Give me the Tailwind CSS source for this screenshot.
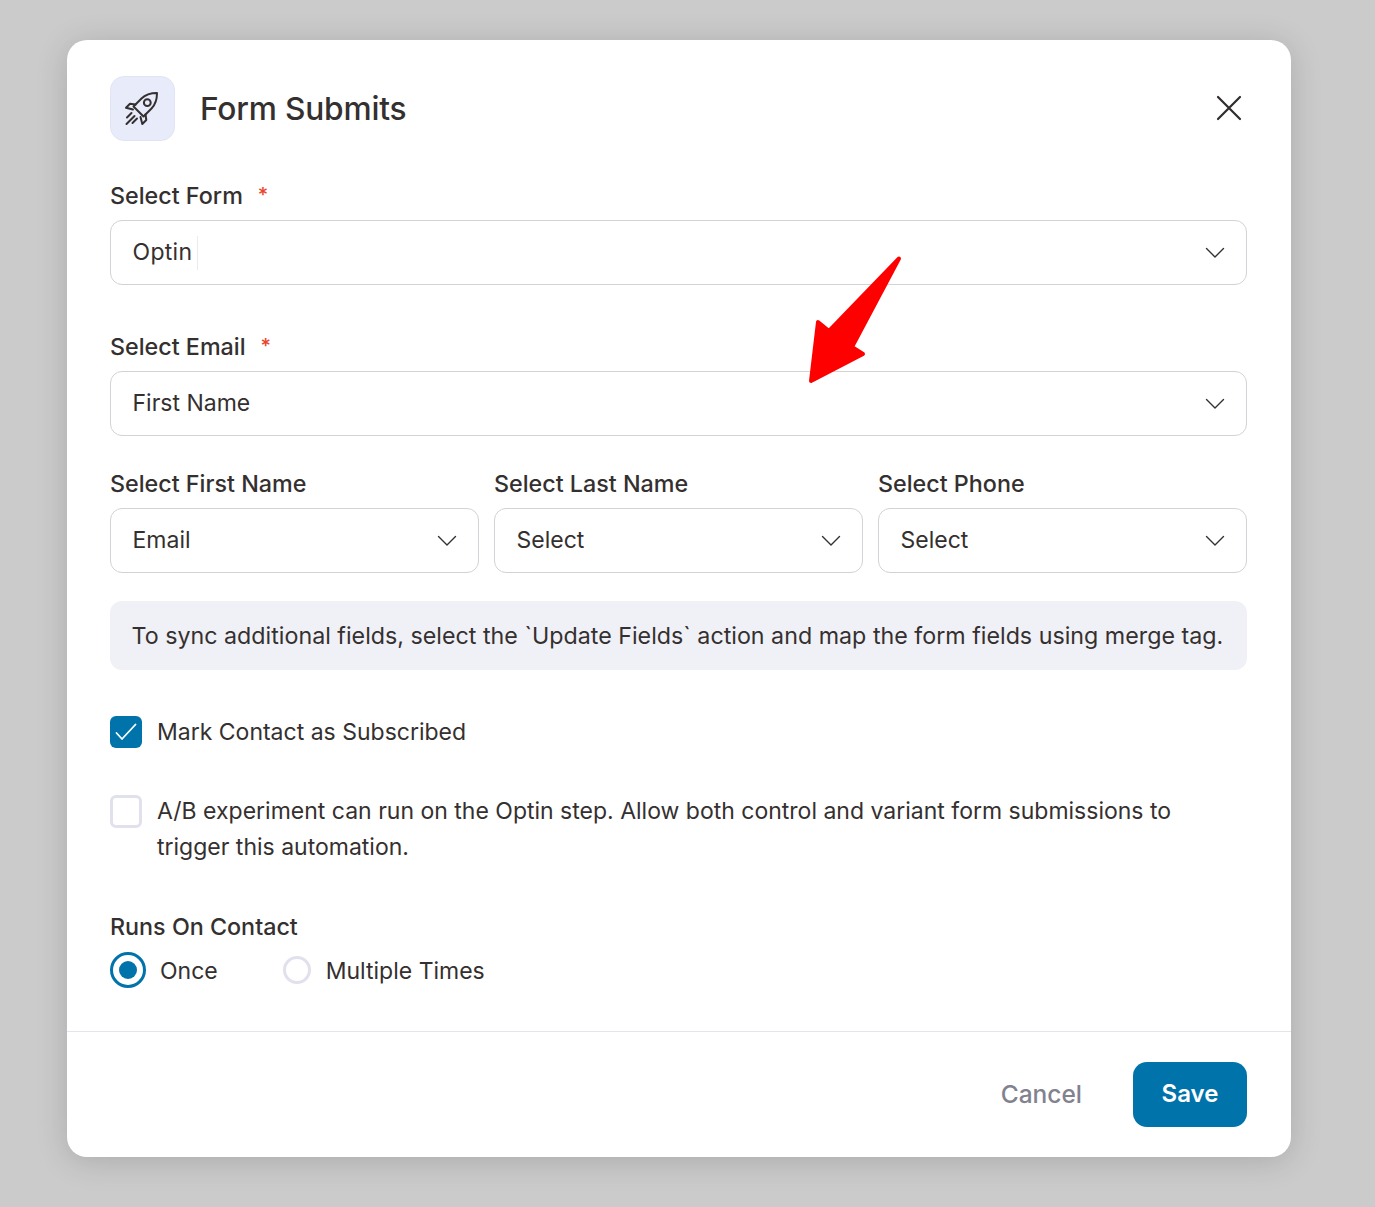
<!DOCTYPE html>
<html lang="en">
<head>
    <meta charset="utf-8" />
    <title>Form Submits</title>
    <script src="https://cdn.jsdelivr.net/npm/@tailwindcss/browser@4"></script>
</head>
<body class="bg-[#cbcbcb] font-['Inter',sans-serif] text-[#353030] h-[1207px] overflow-hidden">
    <div class="relative ml-[67px] mt-[40px] w-[1224px] h-[1117px] bg-white rounded-[20px] shadow-[0_4px_32px_rgba(0,0,0,0.16)] flow-root">
        <div class="pl-[43px] pr-[44px] pt-[36px]">
            <!-- header -->
            <div class="flex items-center h-[65px]">
                <div class="w-[65px] h-[65px] rounded-[14px] bg-[#e8ebfa] border border-[#e2e4f2] flex items-center justify-center">
                    <svg class="w-[36px] h-[36px] -ml-[3px]" viewBox="0 0 36 36" fill="none" stroke="#353030" stroke-width="2" stroke-linecap="round" stroke-linejoin="round">
                        <path d="M34 2c-6 0-11.500 1.500-15.500 5.500L10.500 15.500l10 10 8-8C32.500 13.500 34 8 34 2z" />
                        <circle cx="24.300" cy="11.700" r="3.400" />
                        <path d="M12.500 13.500l-5.500-.8-4 4 7 1.800" />
                        <path d="M22.500 23.500l.8 5.500-4 4-1.800-7" />
                        <path d="M8.500 22l-4.500 4.500M11.500 25l-8 8M14 27.500l-4.500 4.500" />
                    </svg>
                </div>
                <h1 class="ml-[25px] text-[31.700px] font-medium tracking-[-0.2px] flex-1">Form Submits</h1>
                <svg class="w-[28px] h-[28px] mr-[4px] -mt-[2px]" viewBox="0 0 28 28" fill="none" stroke="#2f2c2c" stroke-width="2.200" stroke-linecap="round">
                    <path d="M3 3l22 22M25 3L3 25" />
                </svg>
            </div>

            <!-- select form -->
            <div class="mt-[40px] h-[30px] mb-[9px] flex items-center text-[23.300px] font-medium">
                Select Form <span class="ml-[15px] text-[#e8452c] text-[20px] -mt-[2px]">*</span>
            </div>
            <div class="h-[65px] rounded-[12px] border border-[#d3d3d6] flex items-center justify-between pl-[21.500px] pr-[21px] text-[23px]">
                <div class="flex items-center tracking-[0.3px]">Optin<span class="ml-[5px] w-px h-[34px] bg-[#ececec]"></span></div>
                <svg class="w-[20px] h-[12px]" viewBox="0 0 20 12" fill="none" stroke="#353030" stroke-width="1.400" stroke-linecap="round" stroke-linejoin="round"><path d="M1.500 1.500l8.500 8.500 8.500-8.500" /></svg>
            </div>

            <!-- select email -->
            <div class="mt-[47px] h-[30px] mb-[9px] flex items-center text-[23.300px] font-medium">
                Select Email <span class="ml-[15px] text-[#e8452c] text-[20px] -mt-[2px]">*</span>
            </div>
            <div class="h-[65px] rounded-[12px] border border-[#d3d3d6] flex items-center justify-between pl-[21.500px] pr-[21px] text-[23px]">
                First Name
                <svg class="w-[20px] h-[12px]" viewBox="0 0 20 12" fill="none" stroke="#353030" stroke-width="1.400" stroke-linecap="round" stroke-linejoin="round"><path d="M1.500 1.500l8.500 8.500 8.500-8.500" /></svg>
            </div>

            <!-- name and phone -->
            <div class="mt-[33px] grid grid-cols-3 gap-x-[15px]">
                <div>
                    <div class="h-[30px] mb-[9px] flex items-center text-[23.300px] font-medium">Select First Name</div>
                    <div class="h-[65px] rounded-[12px] border border-[#d3d3d6] flex items-center justify-between pl-[21.500px] pr-[21px] text-[23px]">
                        Email
                        <svg class="w-[20px] h-[12px]" viewBox="0 0 20 12" fill="none" stroke="#353030" stroke-width="1.400" stroke-linecap="round" stroke-linejoin="round"><path d="M1.500 1.500l8.500 8.500 8.500-8.500" /></svg>
                    </div>
                </div>
                <div>
                    <div class="h-[30px] mb-[9px] flex items-center text-[23.300px] font-medium">Select Last Name</div>
                    <div class="h-[65px] rounded-[12px] border border-[#d3d3d6] flex items-center justify-between pl-[21.500px] pr-[21px] text-[23px]">
                        Select
                        <svg class="w-[20px] h-[12px]" viewBox="0 0 20 12" fill="none" stroke="#353030" stroke-width="1.400" stroke-linecap="round" stroke-linejoin="round"><path d="M1.500 1.500l8.500 8.500 8.500-8.500" /></svg>
                    </div>
                </div>
                <div>
                    <div class="h-[30px] mb-[9px] flex items-center text-[23.300px] font-medium">Select Phone</div>
                    <div class="h-[65px] rounded-[12px] border border-[#d3d3d6] flex items-center justify-between pl-[21.500px] pr-[21px] text-[23px]">
                        Select
                        <svg class="w-[20px] h-[12px]" viewBox="0 0 20 12" fill="none" stroke="#353030" stroke-width="1.400" stroke-linecap="round" stroke-linejoin="round"><path d="M1.500 1.500l8.500 8.500 8.500-8.500" /></svg>
                    </div>
                </div>
            </div>

            <!-- info -->
            <div class="mt-[28px] h-[69px] rounded-[12px] bg-[#f0f1f7] flex items-center pl-[21.500px] pt-[2px] text-[23.250px] whitespace-nowrap">
                To sync additional fields, select the `Update Fields` action and map the form fields using merge tag.
            </div>

            <!-- checkboxes -->
            <div class="mt-[46px] flex items-center text-[23px] h-[32px]">
                <span class="w-[32px] h-[32px] rounded-[6px] bg-[#0073aa] flex items-center justify-center shrink-0">
                    <svg class="w-[22px] h-[18px]" viewBox="0 0 22 18" fill="none" stroke="#fff" stroke-width="1.800" stroke-linecap="round" stroke-linejoin="round"><path d="M1.500 10l5.500 6L20.500 1.500" /></svg>
                </span>
                <span class="ml-[15px]">Mark Contact as Subscribed</span>
            </div>
            <div class="mt-[45px] flex items-start text-[23px]">
                <span class="mt-[2px] w-[32px] h-[33px] rounded-[6px] border-[3px] border-[#e1e1ee] bg-white shrink-0"></span>
                <span class="ml-[15px] leading-[36px]">A/B experiment can run on the Optin step. Allow both control and variant form submissions to<br />trigger this automation.</span>
            </div>

            <!-- runs on -->
            <div class="mt-[47px] h-[30px] flex items-center text-[23.300px] font-medium">Runs On Contact</div>
            <div class="mt-[10px] flex items-center h-[35px] text-[23px]">
                <span class="w-[36px] h-[36px] rounded-full border-[3px] border-[#0073aa] flex items-center justify-center shrink-0">
                    <span class="w-[18px] h-[18px] rounded-full bg-[#0073aa]"></span>
                </span>
                <span class="ml-[14px] pt-[3px]">Once</span>
                <span class="ml-[65px] w-[28px] h-[28px] rounded-full border-[3px] border-[#e1e1ee] shrink-0"></span>
                <span class="ml-[15px] pt-[3px]">Multiple Times</span>
            </div>
        </div>

        <!-- footer -->
        <div class="absolute inset-x-0 bottom-0 border-t border-[#e4e4ec] h-[126px] flex items-center justify-end pr-[44px] pb-[1px]">
            <span class="text-[24.500px] font-medium text-[#82828e] mr-[51px]">Cancel</span>
            <span class="w-[114px] h-[65px] rounded-[14px] bg-[#0073aa] text-white text-[24px] font-semibold flex items-center justify-center">Save</span>
        </div>

        <!-- annotation arrow -->
        <svg class="absolute left-[733px] top-[205px] w-[110px] h-[150px]" viewBox="800 245 110 150" fill="#ff0000" stroke="#ff0000" stroke-width="4" stroke-linejoin="round">
            <path d="M899 258.500 L829 331 L818 322 L811 381 L863 354 L852 347 Z" />
        </svg>
    </div>
</body>
</html>
